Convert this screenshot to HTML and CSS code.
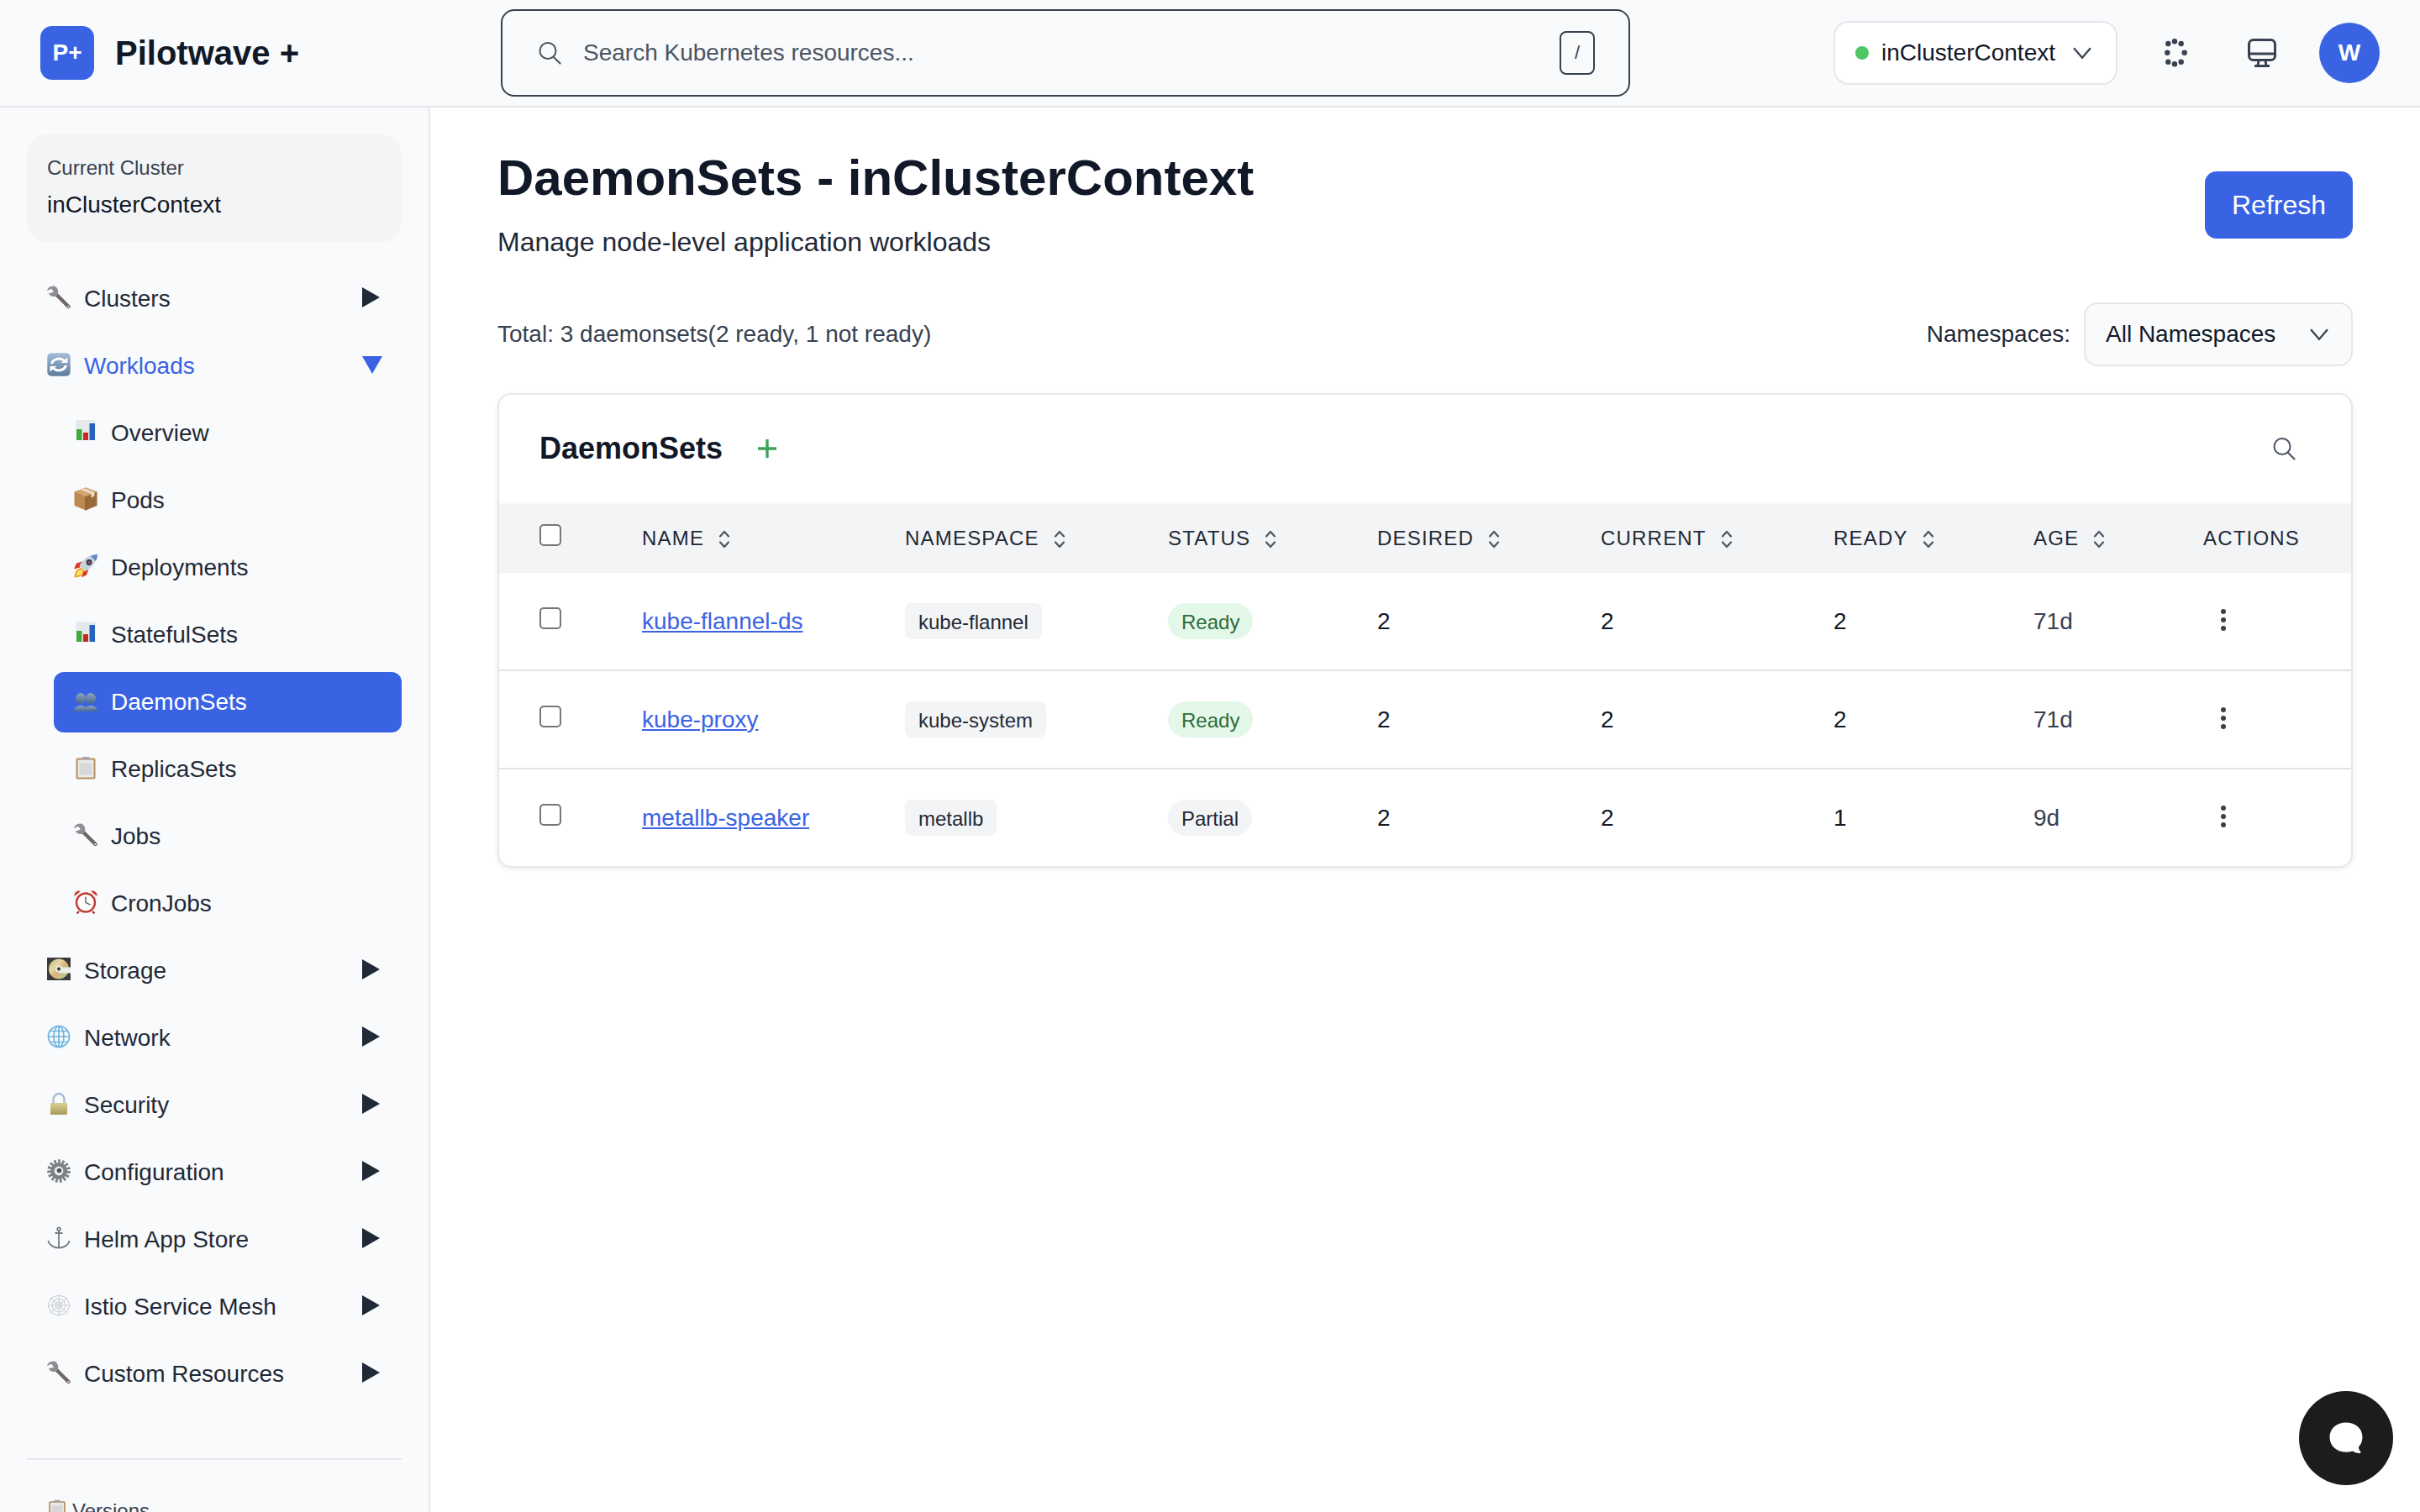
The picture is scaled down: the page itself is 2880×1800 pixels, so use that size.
FILE: index.html
```html
<!DOCTYPE html>
<html lang="en">
<head>
<meta charset="utf-8">
<title>DaemonSets - inClusterContext</title>
<link rel="stylesheet" href="styles.css">
</head>
<body>
<svg class="defs" aria-hidden="true">
  <defs>
    <linearGradient id="gBlue" x1="0" y1="0" x2="0" y2="1"><stop offset="0" stop-color="#a5bdd6"/><stop offset="1" stop-color="#5d7c9c"/></linearGradient>
    <linearGradient id="gGold" x1="0" y1="0" x2="0" y2="1"><stop offset="0" stop-color="#d8cf94"/><stop offset="1" stop-color="#a89c5c"/></linearGradient>
    <linearGradient id="gPeople" x1="0" y1="0" x2="0" y2="1"><stop offset="0" stop-color="#8fa5bd"/><stop offset="1" stop-color="#46678f"/></linearGradient>
    <linearGradient id="gDisc" x1="0" y1="0" x2="1" y2="1"><stop offset="0" stop-color="#b9b58a"/><stop offset=".35" stop-color="#e8d9a0"/><stop offset=".55" stop-color="#d9b27a"/><stop offset=".8" stop-color="#bfc48c"/><stop offset="1" stop-color="#8f9168"/></linearGradient>
    <symbol id="i-wrench" viewBox="0 0 28 28">
      <path d="M10 9.5 L25.5 25" stroke="#6f6768" stroke-width="4.4" stroke-linecap="round"/>
      <path d="M9 0.6 C4 -0.2 0.4 3 0.2 6 L5.2 3.8 L8 7.6 L2 9.6 C3.5 13.5 9 14 12 11.4 C14.6 8 13 2.4 9 0.6 Z" fill="#8e8e94"/>
      <circle cx="25.4" cy="25" r="1" fill="#e5e5e5"/>
    </symbol>
    <symbol id="i-reload" viewBox="0 0 28 28">
      <rect x="0.3" y="0.3" width="27.4" height="27.4" rx="5" fill="url(#gBlue)"/>
      <path d="M5.5 13 A8.8 7.5 0 0 1 20.5 9.5" fill="none" stroke="#fff" stroke-width="3"/>
      <path d="M16.5 12 H24.5 V5.5 Z" fill="#fff"/>
      <path d="M22.5 15 A8.8 7.5 0 0 1 7.5 18.5" fill="none" stroke="#fff" stroke-width="3"/>
      <path d="M11.5 16 H3.5 V22.5 Z" fill="#fff"/>
    </symbol>
    <symbol id="i-chart" viewBox="0 0 28 28">
      <rect x="2.5" y="0" width="23" height="24" fill="#e6e9ec"/>
      <rect x="3" y="11" width="6.5" height="13" fill="#45a83b"/>
      <rect x="11" y="15" width="6" height="9" fill="#c8281e"/>
      <rect x="18.5" y="4" width="6.5" height="20" fill="#2763bd"/>
    </symbol>
    <symbol id="i-box" viewBox="0 0 28 28">
      <path d="M14 0.5 L27.5 5.5 V22 L14 27.5 Z" fill="#9a6a38"/>
      <path d="M14 0.5 L0.5 5.5 V22 L14 27.5 Z" fill="#bd8a50"/>
      <path d="M0.5 5.5 L14 0.5 L27.5 5.5 L14 11 Z" fill="#d3a670"/>
      <path d="M14 11 V27.5" stroke="#7f5529" stroke-width="1"/>
      <path d="M8 2.8 L20.5 8 V12.5 L24.5 10.6 V6.2 L13 1.6 Z" fill="#e9dcc5"/>
    </symbol>
    <symbol id="i-rocket" viewBox="0 0 28 28">
      <path d="M0.5 27.5 C0.5 21 4 16 9 16 L12.5 19.5 C12.5 24 7 27.5 0.5 27.5 Z" fill="#f4a623"/>
      <path d="M3 25 C3 21.5 5.5 19 8 18 L10.5 20.5 C10.5 23 7 25 3 25 Z" fill="#fbe36f"/>
      <path d="M11 8 L3 10.5 L0 17.5 L7 15.5 Z" fill="#d93a26"/>
      <path d="M17.5 17 L15 24.5 L9 27.5 L11.5 20.5 Z" fill="#d93a26"/>
      <path d="M28 0 C20 0 11.5 4.5 6.5 13 L13.5 20 C22 15.5 27.5 8 28 0 Z" fill="#c7d2dc"/>
      <path d="M28 0 C25.5 0.2 22.8 0.8 20 1.9 L26 8 C27.2 5.4 27.9 2.8 28 0 Z" fill="#5f87c9"/>
      <circle cx="18" cy="9.5" r="3.4" fill="#27384f"/>
      <circle cx="18" cy="9.5" r="1.6" fill="#d9483a"/>
    </symbol>
    <symbol id="i-people" viewBox="0 0 28 28">
      <g fill="url(#gPeople)">
        <ellipse cx="8" cy="11.5" rx="6" ry="6.5"/>
        <ellipse cx="20" cy="11.5" rx="6" ry="6.5"/>
        <path d="M0 27 C0 22 4 20 8 20 C12 20 16 22 16 27 Z"/>
        <path d="M12 27 C12 22 16 20 20 20 C24 20 28 22 28 27 Z"/>
      </g>
    </symbol>
    <symbol id="i-clip" viewBox="0 0 28 28">
      <rect x="2.5" y="2.5" width="23" height="25" rx="2" fill="#b38f5f"/>
      <rect x="4.5" y="4.5" width="19" height="21" fill="#e9e9ea"/>
      <rect x="6.5" y="8.5" width="15" height="14" fill="#d7d7d9"/>
      <rect x="9.5" y="1" width="9" height="3.5" rx="1" fill="#a6a6a8"/>
    </symbol>
    <symbol id="i-clock" viewBox="0 0 28 28">
      <circle cx="14" cy="14.5" r="11" fill="#fdfdfd" stroke="#c23a33" stroke-width="2.4"/>
      <path d="M0.5 7 A5.5 5.5 0 0 1 8 1 Z" fill="#c23a33"/>
      <path d="M27.5 7 A5.5 5.5 0 0 0 20 1 Z" fill="#c23a33"/>
      <path d="M14 7.5 V14.5 L19.5 17" fill="none" stroke="#333" stroke-width="1.1"/>
      <path d="M6 25 L3.5 27.5 M22 25 L24.5 27.5" stroke="#9c2a25" stroke-width="2"/>
    </symbol>
    <symbol id="i-disc" viewBox="0 0 28 28">
      <rect x="0" y="0" width="28" height="27" fill="#3a3a3a"/>
      <circle cx="14" cy="13.5" r="12" fill="url(#gDisc)"/>
      <path d="M14 11.5 H28 V18.5 H14 Z" fill="#eceee6"/>
      <circle cx="14" cy="13.5" r="4.4" fill="#e8e8df"/>
      <circle cx="14" cy="13.5" r="2" fill="#333"/>
    </symbol>
    <symbol id="i-globe" viewBox="0 0 28 28">
      <g fill="none" stroke="#6fb4dd" stroke-width="1.7">
        <circle cx="14" cy="14" r="12.5"/>
        <ellipse cx="14" cy="14" rx="6" ry="12.5"/>
        <path d="M14 1.5 V26.5 M1.5 14 H26.5 M3.5 7.5 H24.5 M3.5 20.5 H24.5"/>
      </g>
    </symbol>
    <symbol id="i-lock" viewBox="0 0 28 28">
      <path d="M7.5 14 V9 A6.5 7 0 0 1 20.5 9 V14" fill="none" stroke="#a8bcd4" stroke-width="2.4"/>
      <rect x="4" y="13" width="20" height="14" rx="1" fill="url(#gGold)"/>
    </symbol>
    <symbol id="i-gear" viewBox="0 0 28 28">
      <circle cx="14" cy="14" r="11" fill="none" stroke="#7c7f84" stroke-width="5.6" stroke-dasharray="2.6 2"/>
      <circle cx="14" cy="14" r="10" fill="#7d8085"/>
      <circle cx="14" cy="14" r="5.4" fill="#eceef0"/>
      <circle cx="14.5" cy="13.5" r="2.8" fill="#50545a"/>
    </symbol>
    <symbol id="i-anchor" viewBox="0 0 28 28">
      <g fill="none" stroke="#777b80" stroke-width="1.8">
        <circle cx="14" cy="3.2" r="1.8"/>
        <path d="M14 5 V25 M9.5 8 H18.5"/>
        <path d="M1.5 17 C2 22 8 25.5 14 25.5 C20 25.5 26 22 26.5 17"/>
      </g>
    </symbol>
    <symbol id="i-web" viewBox="0 0 28 28">
      <g fill="none" stroke="#c9ccd0" stroke-width="1">
        <path d="M14 1 V27 M1 14 H27 M4 5 L24 23 M24 5 L4 23"/>
        <path d="M14 2 L23 5 L27 14 L23 23 L14 26 L5 23 L1 14 L5 5 Z"/>
        <path d="M14 6 L20 8 L22 14 L20 20 L14 22 L8 20 L6 14 L8 8 Z"/>
        <path d="M14 10 L17 11 L18 14 L17 17 L14 18 L11 17 L10 14 L11 11 Z"/>
      </g>
    </symbol>
    <symbol id="i-right" viewBox="0 0 24 24"><path d="M0 0 L21 12 L0 24 Z"/></symbol>
    <symbol id="i-down" viewBox="0 0 24 24"><path d="M0 2 H24 L12 23 Z"/></symbol>
    <symbol id="i-chev" viewBox="0 0 24 24"><path d="M3.5 7 L12 17 L20.5 7" fill="none" stroke="currentColor" stroke-width="1.9"/></symbol>
    <symbol id="i-sort" viewBox="0 0 14 22"><path d="M2 7.5 L7 2 L12 7.5 M2 14.5 L7 20 L12 14.5" fill="none" stroke="currentColor" stroke-width="2.2" stroke-linecap="round" stroke-linejoin="round"/></symbol>
    <symbol id="i-search" viewBox="0 0 28 28"><circle cx="12" cy="11.5" r="9.5" fill="none" stroke="currentColor" stroke-width="2"/><path d="M18.5 18.5 L26.5 26.5" stroke="currentColor" stroke-width="2.2" stroke-linecap="round"/></symbol>
  </defs>
</svg>

<header class="topbar">
  <div class="brand">
    <div class="logo">P+</div>
    <div class="brand-name">Pilotwave +</div>
  </div>
  <div class="search">
    <svg class="search-icon"><use href="#i-search"/></svg>
    <span class="search-text">Search Kubernetes resources...</span>
    <kbd class="kbd">/</kbd>
  </div>
  <div class="top-right">
    <div class="ctx">
      <span class="ctx-dot"></span>
      <span class="ctx-name">inClusterContext</span>
      <svg class="chev"><use href="#i-chev"/></svg>
    </div>
    <button class="icon-btn spinner-btn" aria-label="Theme">
      <svg class="spinner" viewBox="0 0 34 34"><g fill="#374151"><circle cx="7.3" cy="6" r="3.2"/><circle cx="15" cy="3.3" r="3.2"/><circle cx="22.7" cy="6" r="3.2"/><circle cx="26.7" cy="16.7" r="3.2"/><circle cx="22.7" cy="27.7" r="3.2"/><circle cx="15" cy="30.3" r="3.2"/><circle cx="7.3" cy="27.7" r="3.2"/><circle cx="6.3" cy="16.7" r="3.2"/></g></svg>
    </button>
    <button class="icon-btn monitor-btn" aria-label="Display">
      <svg class="monitor" viewBox="0 0 34 34"><g fill="none" stroke="#374151" stroke-width="3"><rect x="1.5" y="1.5" width="31" height="24" rx="5"/><path d="M2 18 H32" stroke-width="3"/><path d="M13 26 L12 32 M21 26 L22 32"/><path d="M8 32.5 H26"/></g></svg>
    </button>
    <div class="avatar">W</div>
  </div>
</header>

<div class="layout">
  <aside class="sidebar">
    <div class="cluster-box">
      <div class="cluster-label">Current Cluster</div>
      <div class="cluster-name">inClusterContext</div>
    </div>
    <nav class="nav">
      <a class="nav-item"><svg class="emoji"><use href="#i-wrench"/></svg><span class="nav-text">Clusters</span><svg class="caret"><use href="#i-right"/></svg></a>
      <a class="nav-item open"><svg class="emoji"><use href="#i-reload"/></svg><span class="nav-text">Workloads</span><svg class="caret"><use href="#i-down"/></svg></a>
      <div class="subnav">
        <a class="nav-item"><svg class="emoji"><use href="#i-chart"/></svg><span class="nav-text">Overview</span></a>
        <a class="nav-item"><svg class="emoji"><use href="#i-box"/></svg><span class="nav-text">Pods</span></a>
        <a class="nav-item"><svg class="emoji"><use href="#i-rocket"/></svg><span class="nav-text">Deployments</span></a>
        <a class="nav-item"><svg class="emoji"><use href="#i-chart"/></svg><span class="nav-text">StatefulSets</span></a>
        <a class="nav-item active"><svg class="emoji"><use href="#i-people"/></svg><span class="nav-text">DaemonSets</span></a>
        <a class="nav-item"><svg class="emoji"><use href="#i-clip"/></svg><span class="nav-text">ReplicaSets</span></a>
        <a class="nav-item"><svg class="emoji"><use href="#i-wrench"/></svg><span class="nav-text">Jobs</span></a>
        <a class="nav-item"><svg class="emoji"><use href="#i-clock"/></svg><span class="nav-text">CronJobs</span></a>
      </div>
      <a class="nav-item"><svg class="emoji"><use href="#i-disc"/></svg><span class="nav-text">Storage</span><svg class="caret"><use href="#i-right"/></svg></a>
      <a class="nav-item"><svg class="emoji"><use href="#i-globe"/></svg><span class="nav-text">Network</span><svg class="caret"><use href="#i-right"/></svg></a>
      <a class="nav-item"><svg class="emoji"><use href="#i-lock"/></svg><span class="nav-text">Security</span><svg class="caret"><use href="#i-right"/></svg></a>
      <a class="nav-item"><svg class="emoji"><use href="#i-gear"/></svg><span class="nav-text">Configuration</span><svg class="caret"><use href="#i-right"/></svg></a>
      <a class="nav-item"><svg class="emoji"><use href="#i-anchor"/></svg><span class="nav-text">Helm App Store</span><svg class="caret"><use href="#i-right"/></svg></a>
      <a class="nav-item"><svg class="emoji"><use href="#i-web"/></svg><span class="nav-text">Istio Service Mesh</span><svg class="caret"><use href="#i-right"/></svg></a>
      <a class="nav-item"><svg class="emoji"><use href="#i-wrench"/></svg><span class="nav-text">Custom Resources</span><svg class="caret"><use href="#i-right"/></svg></a>
    </nav>
    <div class="sidebar-foot">
      <svg class="foot-icon"><use href="#i-clip"/></svg>
      <span>Versions</span>
    </div>
  </aside>

  <main class="main">
    <div class="page-head">
      <div>
        <h1 class="page-title">DaemonSets - inClusterContext</h1>
        <p class="page-sub">Manage node-level application workloads</p>
      </div>
      <button class="refresh">Refresh</button>
    </div>

    <div class="toolbar">
      <div class="total">Total: 3 daemonsets(2 ready, 1 not ready)</div>
      <div class="ns">
        <span class="ns-label">Namespaces:</span>
        <div class="ns-select"><span>All Namespaces</span><svg class="chev"><use href="#i-chev"/></svg></div>
      </div>
    </div>

    <section class="card">
      <div class="card-head">
        <h2 class="card-title">DaemonSets</h2>
        <svg class="plus" viewBox="0 0 24 24"><path d="M12 1 V23 M1 12 H23" stroke="#3da35a" stroke-width="3.4"/></svg>
        <svg class="card-search"><use href="#i-search"/></svg>
      </div>
      <table class="table">
        <colgroup>
          <col class="c1"><col class="c2"><col class="c3"><col class="c4"><col class="c5"><col class="c6"><col class="c7"><col class="c8"><col class="c9">
        </colgroup>
        <thead>
          <tr>
            <th class="check-cell"><input type="checkbox" class="check" aria-label="Select all"></th>
            <th>Name<svg class="sort"><use href="#i-sort"/></svg></th>
            <th>Namespace<svg class="sort"><use href="#i-sort"/></svg></th>
            <th>Status<svg class="sort"><use href="#i-sort"/></svg></th>
            <th>Desired<svg class="sort"><use href="#i-sort"/></svg></th>
            <th>Current<svg class="sort"><use href="#i-sort"/></svg></th>
            <th>Ready<svg class="sort"><use href="#i-sort"/></svg></th>
            <th>Age<svg class="sort"><use href="#i-sort"/></svg></th>
            <th>Actions</th>
          </tr>
        </thead>
        <tbody>
          <tr>
            <td class="check-cell"><input type="checkbox" class="check" aria-label="Select row"></td>
            <td><a class="res-link">kube-flannel-ds</a></td>
            <td><span class="chip">kube-flannel</span></td>
            <td><span class="pill ready">Ready</span></td>
            <td>2</td><td>2</td><td>2</td>
            <td class="age">71d</td>
            <td><span class="kebab"><i></i><i></i><i></i></span></td>
          </tr>
          <tr>
            <td class="check-cell"><input type="checkbox" class="check" aria-label="Select row"></td>
            <td><a class="res-link">kube-proxy</a></td>
            <td><span class="chip">kube-system</span></td>
            <td><span class="pill ready">Ready</span></td>
            <td>2</td><td>2</td><td>2</td>
            <td class="age">71d</td>
            <td><span class="kebab"><i></i><i></i><i></i></span></td>
          </tr>
          <tr>
            <td class="check-cell"><input type="checkbox" class="check" aria-label="Select row"></td>
            <td><a class="res-link">metallb-speaker</a></td>
            <td><span class="chip">metallb</span></td>
            <td><span class="pill partial">Partial</span></td>
            <td>2</td><td>2</td><td>1</td>
            <td class="age">9d</td>
            <td><span class="kebab"><i></i><i></i><i></i></span></td>
          </tr>
        </tbody>
      </table>
    </section>
  </main>
</div>

<button class="chat" aria-label="Chat">
  <svg class="chat-icon" viewBox="0 0 40 38"><path d="M20 0.5 C31 0.5 39.5 7.5 39.5 18 C39.5 23 37.5 27 35 29.5 C35 32 36 34 37.5 35.5 C38 36.5 37 37 36 37 C32.5 37 29.5 35.5 27.5 34.5 C25.5 35.3 23 35.7 20 35.7 C9 35.7 0.5 28.5 0.5 18 C0.5 7.5 9 0.5 20 0.5 Z" fill="#fff"/></svg>
</button>
</body>
</html>
```

FILE: styles.css
```css
* { box-sizing: border-box; }
html, body { margin: 0; padding: 0; }
body {
  width: 2880px;
  height: 1800px;
  overflow: hidden;
  font-family: "Liberation Sans", Arial, sans-serif;
  color: #111827;
  background: #fff;
  display: flex;
  flex-direction: column;
}
.defs { position: absolute; width: 0; height: 0; }

/* top bar */
.topbar {
  height: 128px;
  flex: none;
  display: flex;
  align-items: center;
  padding: 0 48px;
  background: #f9fafb;
  border-bottom: 2px solid #e5e7eb;
}
.brand { width: 548px; display: flex; align-items: center; gap: 25px; flex: none; }
.logo {
  width: 64px; height: 64px;
  border-radius: 14px;
  background: #3a63e4;
  color: #fff;
  font-weight: 700;
  font-size: 28px;
  display: flex; align-items: center; justify-content: center;
}
.brand-name { font-size: 40px; font-weight: 700; color: #111827; }
.search {
  width: 1344px; height: 104px;
  flex: none;
  display: flex; align-items: center;
  padding: 0 40px 0 42px;
  border: 2px solid #374151;
  border-radius: 16px;
  background: #f9fafb;
}
.search-icon { width: 28px; height: 28px; color: #4b5563; flex: none; }
.search-text { margin-left: 26px; font-size: 28px; color: #4b5563; flex: 1; }
.kbd {
  width: 42px; height: 52px;
  display: flex; align-items: center; justify-content: center;
  border: 2px solid #374151;
  border-radius: 8px;
  font-family: "Liberation Sans", sans-serif;
  font-size: 22px;
  color: #374151;
  background: #f9fafb;
}
.top-right { margin-left: auto; display: flex; align-items: center; }
.ctx {
  width: 338px; height: 76px;
  display: flex; align-items: center;
  padding: 0 26px 0 24px;
  background: #fff;
  border: 2px solid #e5e7eb;
  border-radius: 18px;
}
.ctx-dot { width: 16px; height: 16px; border-radius: 50%; background: #4cc764; flex: none; }
.ctx-name { margin-left: 15px; font-size: 28px; color: #111827; flex: 1; }
.chev { width: 28px; height: 28px; color: #374151; flex: none; }
.icon-btn {
  width: 72px; height: 72px;
  padding: 0;
  background: none; border: 0;
  display: flex; align-items: center; justify-content: center;
}
.spinner-btn { margin-left: 34px; }
.monitor-btn { margin-left: 30px; }
.spinner, .monitor { width: 34px; height: 34px; }
.avatar {
  margin-left: 32px;
  width: 72px; height: 72px;
  border-radius: 50%;
  background: #3a63e4;
  color: #fff;
  font-weight: 700;
  font-size: 28px;
  display: flex; align-items: center; justify-content: center;
}

/* layout */
.layout { flex: 1; display: flex; min-height: 0; }
.sidebar {
  width: 512px;
  flex: none;
  padding: 32px 32px 0;
  background: #f9fafb;
  border-right: 2px solid #e5e7eb;
  overflow: hidden;
}
.cluster-box {
  height: 128px;
  padding: 24px;
  background: #f3f4f6;
  border-radius: 24px;
}
.cluster-label { font-size: 24px; line-height: 32px; color: #374151; }
.cluster-name { margin-top: 12px; font-size: 28px; line-height: 32px; color: #111827; }
.nav { margin-top: 32px; display: flex; flex-direction: column; gap: 8px; }
.subnav { margin-left: 32px; display: flex; flex-direction: column; gap: 8px; }
.nav-item {
  height: 72px;
  display: flex; align-items: center;
  padding: 0 23px 0 24px;
  border-radius: 12px;
  color: #1f2937;
  font-size: 28px;
}
.nav-text { margin-left: 16px; flex: 1; }
.emoji { width: 28px; height: 28px; flex: none; margin-bottom: 4px; }
.caret { width: 24px; height: 24px; flex: none; fill: #1f2937; margin-bottom: 4px; }
.nav-item.open { color: #3a63e4; }
.nav-item.open .caret { fill: #3a63e4; }
.nav-item.active { background: #3a63e4; color: #fff; }
.sidebar-foot {
  margin-top: 64px;
  border-top: 2px solid #e5e7eb;
  padding: 46px 0 0 24px;
  display: flex; align-items: center; gap: 6px;
  font-size: 24px;
  line-height: 30px;
  color: #374151;
}
.foot-icon { width: 24px; height: 24px; flex: none; margin-bottom: 4px; }

/* main */
.main { flex: 1; min-width: 0; padding: 48px 80px 0; background: #fff; }
.page-head { display: flex; align-items: center; justify-content: space-between; }
.page-title { margin: 0; font-size: 60px; line-height: 72px; font-weight: 700; color: #111827; }
.page-sub { margin: 16px 0 0; font-size: 32px; line-height: 48px; color: #1f2937; }
.refresh {
  width: 176px; height: 80px;
  background: #3a63e4;
  border: 0; border-radius: 14px;
  color: #fff;
  font-family: inherit;
  font-size: 32px;
}
.toolbar { margin-top: 48px; display: flex; align-items: center; justify-content: space-between; }
.total { font-size: 28px; color: #374151; }
.ns { display: flex; align-items: center; gap: 16px; }
.ns-label { font-size: 28px; color: #1f2937; }
.ns-select {
  width: 320px; height: 76px;
  display: flex; align-items: center; justify-content: space-between;
  padding: 0 24px;
  background: #f9fafb;
  border: 2px solid #e5e7eb;
  border-radius: 16px;
  font-size: 28px;
  color: #111827;
}

/* card */
.card {
  margin-top: 32px;
  border: 2px solid #e5e7eb;
  border-radius: 16px;
  background: #fff;
  box-shadow: 0 2px 6px rgba(0, 0, 0, .07);
  overflow: hidden;
}
.card-head {
  height: 130px;
  display: flex; align-items: center;
  padding: 0 66px 0 48px;
  border-bottom: 2px solid #f9fafb;
}
.card-title { margin: 0; font-size: 36px; font-weight: 700; color: #111827; }
.plus { width: 24px; height: 24px; margin-left: 41px; }
.card-search { width: 28px; height: 28px; margin-left: auto; color: #4b5563; }
.table { width: 100%; border-collapse: separate; border-spacing: 0; table-layout: fixed; }
.c1 { width: 170px; } .c2 { width: 313px; } .c3 { width: 313px; } .c4 { width: 249px; }
.c5 { width: 266px; } .c6 { width: 277px; } .c7 { width: 238px; } .c8 { width: 202px; }
.table th {
  height: 82px;
  padding: 0;
  text-align: left;
  font-size: 24px;
  font-weight: 400;
  letter-spacing: 1.2px;
  text-transform: uppercase;
  color: #1f2937;
  background: #f3f4f6;
}
.table td {
  height: 117px;
  padding: 0;
  font-size: 28px;
  color: #111827;
  border-bottom: 2px solid #e2e3e8;
}
.table tbody tr:last-child td { border-bottom: 0; height: 115px; }
.check-cell { padding-left: 48px !important; }
.check {
  appearance: none;
  display: block;
  width: 26px; height: 26px;
  margin: -8px 0 0;
  background: #fff;
  border: 2px solid #767676;
  border-radius: 5px;
}
.sort { width: 14px; height: 22px; margin-left: 17px; vertical-align: -4px; color: #4b5563; }
.res-link { color: #3a63e4; text-decoration: underline; }
.chip {
  display: inline-block;
  height: 43px;
  padding: 0 16px;
  line-height: 45px;
  border-radius: 8px;
  background: #f3f4f6;
  color: #1f2937;
  font-size: 24px;
}
.pill {
  display: inline-block;
  height: 43px;
  padding: 0 16px;
  line-height: 45px;
  border-radius: 22px;
  font-size: 24px;
}
.pill.ready { background: #e3f8e8; color: #2f6b3c; }
.pill.partial { background: #f3f4f6; color: #1f2937; }
.age { color: #374151 !important; }
.kebab {
  width: 6px;
  margin: -3px 0 0 21px;
  display: flex; flex-direction: column; gap: 4px;
}
.kebab i { display: block; width: 6px; height: 6px; border-radius: 50%; background: #374151; }

/* chat */
.chat {
  position: fixed;
  left: 2736px; top: 1656px;
  width: 112px; height: 112px;
  padding: 0;
  border: 0; border-radius: 50%;
  background: #1c1c1c;
  display: flex; align-items: center; justify-content: center;
}
.chat-icon { width: 40px; height: 38px; }
```
